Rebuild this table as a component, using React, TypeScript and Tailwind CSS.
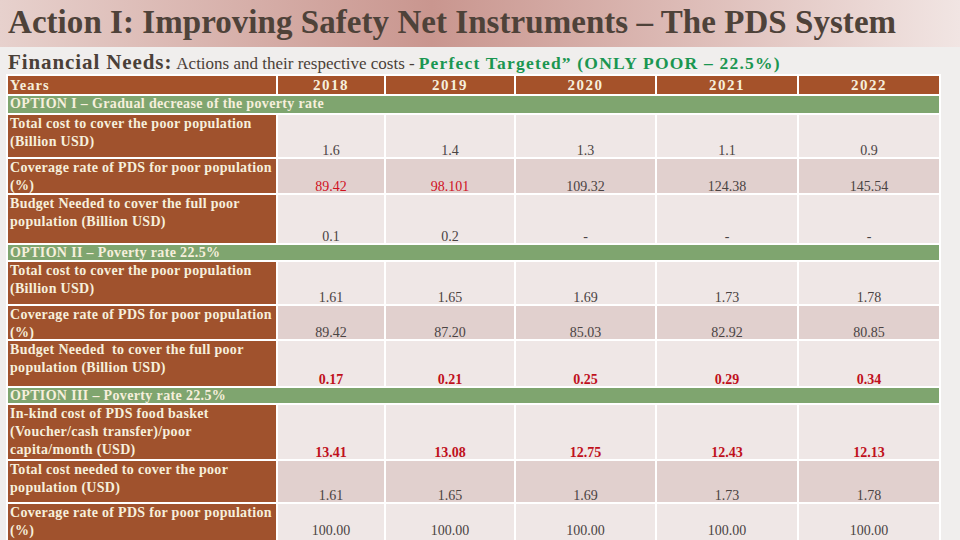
import React from "react";

type Cell = { v: string; tone?: "red" | "redBold" };
type Row = {
  label: string[];
  h: string;
  pb?: string;
  dark?: boolean;
  cells: Cell[];
};
type Section = { title: string; h: string; rows: Row[] };

const plain = (vals: string[]): Cell[] => vals.map((v) => ({ v }));
const red = (vals: string[]): Cell[] => vals.map((v) => ({ v, tone: "red" }));
const redBold = (vals: string[]): Cell[] =>
  vals.map((v) => ({ v, tone: "redBold" }));

const sections: Section[] = [
  {
    title: "OPTION I – Gradual decrease of the poverty rate",
    h: "h-[17px]",
    rows: [
      {
        label: ["Total cost to cover the poor population", "(Billion USD)"],
        h: "h-[42px]",
        cells: plain(["1.6", "1.4", "1.3", "1.1", "0.9"]),
      },
      {
        label: ["Coverage rate of PDS for poor population", "(%)"],
        h: "h-[34px]",
        dark: true,
        cells: [
          ...red(["89.42", "98.101"]),
          ...plain(["109.32", "124.38", "145.54"]),
        ],
      },
      {
        label: ["Budget Needed to cover the full poor", "population (Billion USD)"],
        h: "h-[48px]",
        cells: plain(["0.1", "0.2", "-", "-", "-"]),
      },
    ],
  },
  {
    title: "OPTION II – Poverty rate 22.5%",
    h: "h-[15px]",
    rows: [
      {
        label: ["Total cost to cover the poor population", "(Billion USD)"],
        h: "h-[42px]",
        cells: plain(["1.61", "1.65", "1.69", "1.73", "1.78"]),
      },
      {
        label: ["Coverage rate of PDS for poor population", "(%)"],
        h: "h-[33px]",
        dark: true,
        cells: plain(["89.42", "87.20", "85.03", "82.92", "80.85"]),
      },
      {
        label: ["Budget Needed  to cover the full poor", "population (Billion USD)"],
        h: "h-[45px]",
        cells: redBold(["0.17", "0.21", "0.25", "0.29", "0.34"]),
      },
    ],
  },
  {
    title: "OPTION III – Poverty rate 22.5%",
    h: "h-[15px]",
    rows: [
      {
        label: [
          "In-kind cost of PDS food basket",
          "(Voucher/cash transfer)/poor",
          "capita/month (USD)",
        ],
        h: "h-[54px]",
        cells: redBold(["13.41", "13.08", "12.75", "12.43", "12.13"]),
      },
      {
        label: ["Total cost needed to cover the poor", "population (USD)"],
        h: "h-[41px]",
        dark: true,
        cells: plain(["1.61", "1.65", "1.69", "1.73", "1.78"]),
      },
      {
        label: ["Coverage rate of PDS for poor population", "(%)"],
        h: "h-[42px]",
        pb: "pb-[9px]",
        cells: plain(["100.00", "100.00", "100.00", "100.00", "100.00"]),
      },
    ],
  },
];

const years = ["2018", "2019", "2020", "2021", "2022"];

const serif = "font-['Liberation_Serif','DejaVu_Serif',serif]";

function DataRow({ row }: { row: Row }) {
  return (
    <>
      <div
        className={`${row.h} bg-[#a0522d] px-[2px] text-[14px] leading-[18px] font-bold tracking-[0.3px] text-[#f6efdc]`}
      >
        {row.label.map((l, i) => (
          <div key={i} className="whitespace-pre">
            {l}
          </div>
        ))}
      </div>
      {row.cells.map((c, i) => (
        <div
          key={i}
          className={`${row.h} ${row.pb ?? ""} flex items-end justify-center text-[14px] leading-[12px] ${
            row.dark ? "bg-[#e1d0ce]" : "bg-[#efe7e6]"
          } ${
            c.tone === "red"
              ? "text-[#d0101e]"
              : c.tone === "redBold"
              ? "font-bold text-[#c0101c]"
              : "text-[#4a4343]"
          }`}
        >
          {c.v}
        </div>
      ))}
    </>
  );
}

export default function App() {
  return (
    <div
      className={`w-[960px] h-[540px] overflow-hidden bg-[#f0eeed] ${serif}`}
    >
      <div className="h-[47px] bg-gradient-to-r from-[#e7d1cd] via-[#c9968f] via-45% to-[#f1e5e3] px-[8px] pt-[3px]">
        <h1 className="text-[33px] leading-[38px] font-bold tracking-[0.05px] text-[#4e4239] whitespace-nowrap">
          Action I: Improving Safety Net Instruments – The PDS System
        </h1>
      </div>
      <div className="flex items-baseline px-[8px] h-[27px] pt-[4px] leading-[22px] whitespace-nowrap">
        <span className="text-[21px] font-bold tracking-[0.9px] text-[#4a4038]">
          Financial Needs:
        </span>
        <span className="ml-[4px] text-[17px] text-[#4a4038]">
          Actions and their respective costs -
        </span>
        <span className="ml-[4px] text-[17.5px] font-bold tracking-[1.2px] text-[#1a9651]">
          Perfect Targeted” (ONLY POOR – 22.5%)
        </span>
      </div>
      <div className="mx-[6px] w-[935px] bg-white px-[2px] pt-[2px] grid grid-cols-[268px_106px_128px_139px_140px_140px] gap-[2px]">
        <div className="h-[18px] bg-[#a5522a] px-[2px] text-[14.5px] leading-[18px] font-bold tracking-[1px] text-[#f6efdc]">
          Years
        </div>
        {years.map((y) => (
          <div
            key={y}
            className="h-[18px] bg-[#a5522a] text-center text-[15px] leading-[18px] font-bold tracking-[1.5px] text-[#f6efdc]"
          >
            {y}
          </div>
        ))}
        {sections.map((s) => (
          <React.Fragment key={s.title}>
            <div
              className={`col-span-6 ${s.h} overflow-hidden bg-[#7fa56f] px-[2px] text-[14px] leading-[16px] font-bold tracking-[0.35px] text-[#f6efdc] whitespace-pre`}
            >
              {s.title}
            </div>
            {s.rows.map((r, i) => (
              <DataRow key={i} row={r} />
            ))}
          </React.Fragment>
        ))}
      </div>
    </div>
  );
}
